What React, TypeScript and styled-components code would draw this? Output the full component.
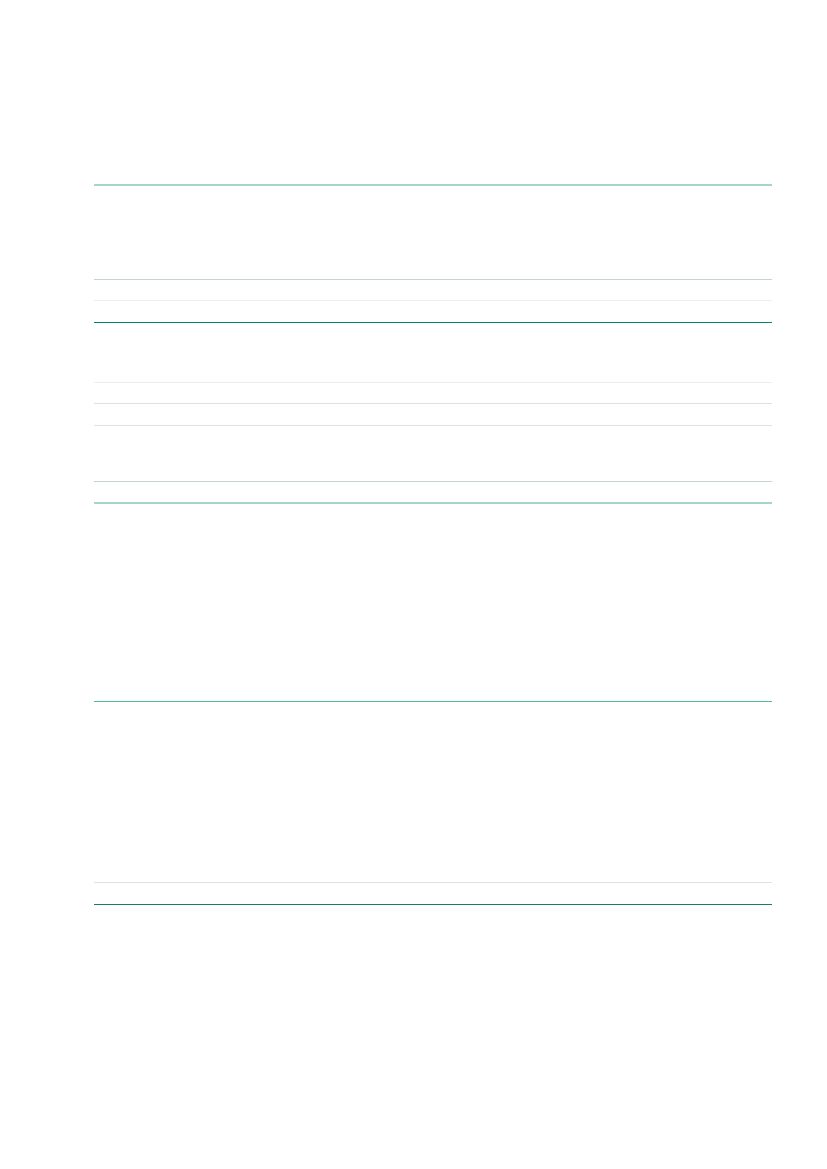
import React from "react";
import styled, { createGlobalStyle } from "styled-components";

const Global = createGlobalStyle`
  html, body { margin: 0; padding: 0; background: #ffffff; }
  body { font-family: "Liberation Sans", Arial, sans-serif; }
`;

const Page = styled.div`
  width: 827px;
  min-height: 1169px;
  box-sizing: border-box;
  padding: 184px 0 0 94px;
  background: #ffffff;
`;

const Table = styled.div`
  width: 678px;
  display: flex;
  flex-direction: column;
  border-top: 2px solid #a5d6c7;
`;

const Row = styled.div<{ $h: number; $line: string; $w?: number }>`
  box-sizing: border-box;
  height: ${(p) => p.$h}px;
  border-bottom: ${(p) => p.$w ?? 1}px solid ${(p) => p.$line};
  display: flex;
`;

const rows: { h: number; line: string; w?: number }[] = [
  { h: 94, line: "#c6d4cf" },
  { h: 21, line: "#e8efed" },
  { h: 22, line: "#00866a" },
  { h: 60, line: "#e8efed" },
  { h: 21, line: "#dce4e1" },
  { h: 22, line: "#dce4e1" },
  { h: 56, line: "#c6d4cf" },
  { h: 22, line: "#a5d6c7", w: 2 },
  { h: 198, line: "#52b89b" },
  { h: 181, line: "#dce4e1" },
  { h: 22, line: "#1a7d62" },
];

export default function App() {
  return (
    <>
      <Global />
      <Page>
        <Table>
          {rows.map((r, i) => (
            <Row key={i} $h={r.h} $line={r.line} $w={r.w} />
          ))}
        </Table>
      </Page>
    </>
  );
}
